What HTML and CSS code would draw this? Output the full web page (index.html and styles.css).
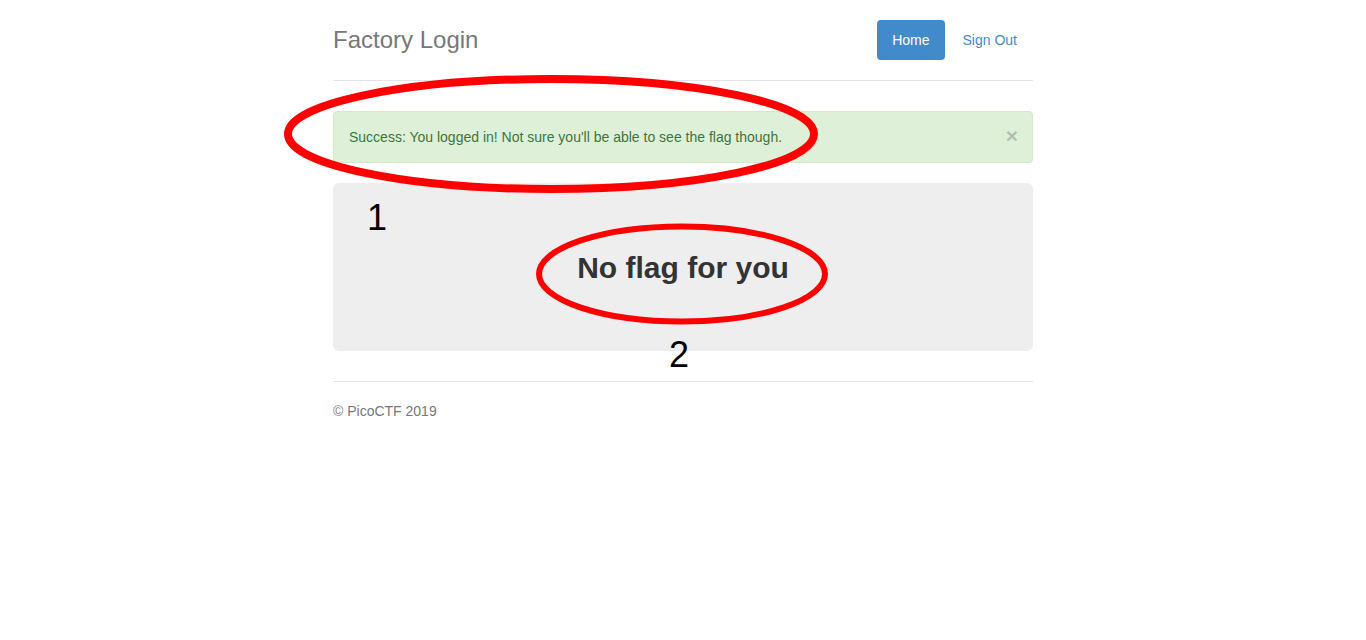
FILE: index.html
```html
<!DOCTYPE html>
<html>
<head>
<meta charset="utf-8">
<title>Factory Login</title>
<link rel="stylesheet" href="styles.css">
</head>
<body>
<div class="container">
  <div class="header">
    <ul class="nav">
      <li class="active"><a href="#">Home</a></li>
      <li><a href="#">Sign Out</a></li>
    </ul>
    <h3 class="brand">Factory Login</h3>
  </div>
  <div class="alert">
    <span class="close">&times;</span>
    Success: You logged in! Not sure you'll be able to see the flag though.
  </div>
  <div class="jumbotron">
    <h2>No flag for you</h2>
  </div>
  <div class="footer">
    <p>&copy; PicoCTF 2019</p>
  </div>
</div>
<svg class="annot" width="1366" height="640" viewBox="0 0 1366 640">
  <ellipse cx="551" cy="134" rx="263" ry="55" fill="none" stroke="#ff0000" stroke-width="8"/>
  <ellipse cx="682" cy="274" rx="143" ry="47.5" fill="none" stroke="#ff0000" stroke-width="6"/>
  <text x="367" y="230" class="num">1</text>
  <text x="669" y="367" class="num">2</text>
</svg>
</body>
</html>
```
FILE: styles.css
```css
html, body {
  margin: 0;
  padding: 0;
}
body {
  font-family: "Liberation Sans", Arial, sans-serif;
  font-size: 14px;
  line-height: 20px;
  color: #333;
  background: #fff;
  padding-top: 20px;
  padding-bottom: 20px;
}
.container {
  width: 700px;
  margin: 0 auto;
}
.header {
  padding-bottom: 20px;
  border-bottom: 1px solid #e5e5e5;
  margin-bottom: 30px;
  display: flex;
  flex-direction: row-reverse;
  justify-content: space-between;
  align-items: center;
}
.brand {
  margin: 0;
  font-size: 24px;
  font-weight: normal;
  line-height: 40px;
  color: #777;
}
.nav {
  list-style: none;
  margin: 0 1px 0 0;
  padding: 0;
  display: flex;
  gap: 3px;
}
.nav a {
  display: block;
  padding: 10px 15px;
  border-radius: 4px;
  color: #428bca;
  text-decoration: none;
}
.nav .active a {
  background: #428bca;
  color: #fff;
}
.alert {
  position: relative;
  padding: 15px 35px 15px 15px;
  border: 1px solid #d6e9c6;
  border-radius: 4px;
  background: #dff0d8;
  color: #3c763d;
  margin-bottom: 20px;
}
.close {
  float: right;
  position: relative;
  top: -2px;
  right: -21px;
  font-size: 21px;
  font-weight: bold;
  line-height: 1;
  color: #000;
  opacity: 0.2;
}
.jumbotron {
  background: #eee;
  border-radius: 6px;
  padding: 48px 60px 67px;
  text-align: center;
  margin-bottom: 30px;
}
.jumbotron h2 {
  margin: 20px 0 0;
  font-size: 30px;
  line-height: 33px;
  font-weight: bold;
  color: #333;
}
.footer {
  padding-top: 19px;
  border-top: 1px solid #e5e5e5;
  color: #777;
}
.footer p {
  margin: 0 0 10px;
}
.annot {
  position: absolute;
  left: 0;
  top: 0;
  pointer-events: none;
}
.num {
  font-family: "Liberation Sans", Arial, sans-serif;
  font-size: 36px;
  fill: #000;
}
```
